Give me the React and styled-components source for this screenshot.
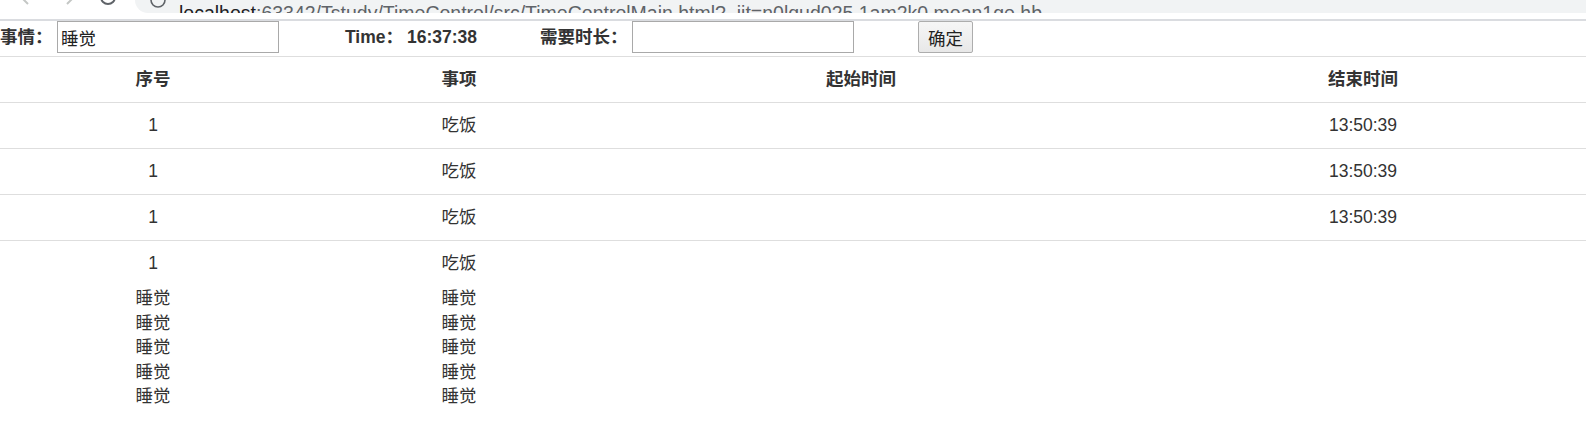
import React from "react";
import styled, { createGlobalStyle } from "styled-components";

const GlobalStyle = createGlobalStyle`
  body {
    margin: 0;
    background: #fff;
    font-family: "Liberation Sans", "Noto Sans CJK SC", sans-serif;
    color: #333;
  }
`

const BrowserBar = styled.div`
  display: flex;
  height: 19px;
  border-bottom: 2px solid #dadce0;
  overflow: hidden;
`

const AddressBar = styled.div`
  flex: 1;
  height: 13px;
  display: flex;
  align-items: flex-end;
  background: #f1f3f4;
  border-bottom-left-radius: 14px;
  overflow: hidden;
`

const AddressText = styled.div`
  font-size: 19.5px;
  line-height: 22px;
  margin-bottom: -11px;
  margin-left: 12px;
  white-space: nowrap;
  color: #5f6368;
`

const Host = styled.span`
  color: #202124;
`

const FormRow = styled.div`
  display: flex;
  align-items: flex-start;
  height: 35px;
  border-bottom: 1px solid #dedede;
`

const Label = styled.div`
  width: ${(p) => p.$w}px;
  margin-left: ${(p) => p.$ml || 0}px;
  height: 32px;
  line-height: 32px;
  font-size: 17.5px;
  font-weight: bold;
  color: #333;
  white-space: nowrap;
`

const TextInput = styled.input`
  box-sizing: border-box;
  width: 222px;
  height: 32px;
  margin: 0;
  padding: 1px 3px;
  border: 1px solid #a9a9a9;
  font-family: inherit;
  font-size: 17.5px;
  color: #222;
  outline: none;
`

const Button = styled.button`
  box-sizing: border-box;
  margin-left: ${(p) => p.$ml}px;
  width: 55px;
  height: 32px;
  padding: 0;
  border: 1px solid #adadad;
  border-radius: 2px;
  background: linear-gradient(#f6f6f6, #e8e8e8);
  font-family: inherit;
  font-size: 17.5px;
  color: #222;
`

const Tables = styled.div`
  display: flex;
  align-items: flex-start;
`

const Block = styled.div`
  width: ${(p) => (p.$w ? `${p.$w}px` : "auto")};
  flex: ${(p) => (p.$w ? "none" : 1)};
`

const Table = styled.table`
  width: 100%;
  table-layout: fixed;
  border-collapse: collapse;
  font-size: 17.5px;
`

const Cell = styled.td`
  width: ${(p) => (p.$w ? `${p.$w}px` : "auto")};
  padding: 12px 0 12px ${(p) => p.$pl || 0}px;
  line-height: 21px;
  text-align: center;
  color: #333;
  font-weight: ${(p) => (p.$head ? "bold" : "normal")};
  border-bottom: ${(p) => (p.$open ? "none" : "1px solid #dedede")};
`

const SleepList = styled.div`
  display: grid;
  grid-template-columns: 306px 306px;
  font-size: 17.5px;
  line-height: 24.5px;
  text-align: center;
  color: #333;
`

function NavIcons() {
  return (
    <svg width="135" height="19" viewBox="0 0 135 19">
      <path d="M28 -8 L22 -2 L28 4" fill="none" stroke="#c4c7c5" strokeWidth="2" />
      <path d="M22 -2 H36" fill="none" stroke="#c4c7c5" strokeWidth="2" />
      <path d="M67 -8 L73 -2 L67 4" fill="none" stroke="#c4c7c5" strokeWidth="2" />
      <path d="M59 -2 H73" fill="none" stroke="#c4c7c5" strokeWidth="2" />
      <circle cx="108" cy="-3" r="7" fill="none" stroke="#5f6368" strokeWidth="2" />
    </svg>
  )
}

function InfoIcon() {
  return (
    <svg width="18" height="13" viewBox="0 0 18 13" style={{ flex: "none", marginLeft: 14 }}>
      <circle cx="9" cy="0" r="7" fill="none" stroke="#5f6368" strokeWidth="1.6" />
    </svg>
  )
}

const rows = [
  { id: 1, item: "吃饭", end: "13:50:39" },
  { id: 1, item: "吃饭", end: "13:50:39" },
  { id: 1, item: "吃饭", end: "13:50:39" },
  { id: 1, item: "吃饭", end: null },
]

export default function App() {
  const sleeps = [0, 1, 2, 3, 4]
  return (
    <>
      <GlobalStyle />
      <BrowserBar>
        <NavIcons />
        <AddressBar>
          <InfoIcon />
          <AddressText>
            <Host>localhost</Host>:63342/Tstudy/TimeControl/src/TimeControlMain.html?_ijt=n0lqud025 1am2k0 moan1ge hb
          </AddressText>
        </AddressBar>
      </BrowserBar>

      <FormRow>
        <Label $w={57}>事情：</Label>
        <TextInput defaultValue="睡觉" />
        <Label $w={62} $ml={66}>Time：</Label>
        <Label $w={133}>16:37:38</Label>
        <Label $w={92}>需要时长：</Label>
        <TextInput />
        <Button $ml={64}>确定</Button>
      </FormRow>

      <Tables>
        <Block $w={612}>
          <Table>
            <thead>
              <tr>
                <Cell as="th" $head $w={306}>序号</Cell>
                <Cell as="th" $head $w={306}>事项</Cell>
              </tr>
            </thead>
            <tbody>
              {rows.map((r, i) => (
                <tr key={i}>
                  <Cell $open={i === rows.length - 1}>{r.id}</Cell>
                  <Cell $open={i === rows.length - 1}>{r.item}</Cell>
                </tr>
              ))}
            </tbody>
          </Table>
          <SleepList>
            {sleeps.map((i) => (
              <React.Fragment key={i}>
                <div>睡觉</div>
                <div>睡觉</div>
              </React.Fragment>
            ))}
          </SleepList>
        </Block>
        <Block>
          <Table>
            <thead>
              <tr>
                <Cell as="th" $head $w={498}>起始时间</Cell>
                <Cell as="th" $head $pl={30}>结束时间</Cell>
              </tr>
            </thead>
            <tbody>
              {rows.filter((r) => r.end).map((r, i) => (
                <tr key={i}>
                  <Cell></Cell>
                  <Cell $pl={30}>{r.end}</Cell>
                </tr>
              ))}
            </tbody>
          </Table>
        </Block>
      </Tables>
    </>
  )
}
